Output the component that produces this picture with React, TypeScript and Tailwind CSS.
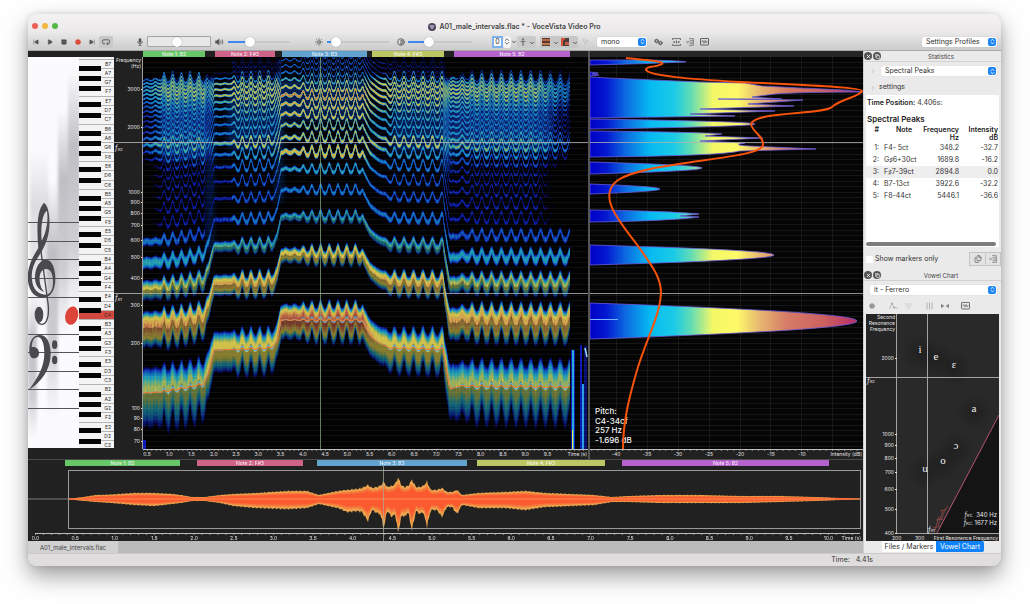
import React from "react";
import {
  SkipBack, SkipForward, Play, Square, Circle, Sun, Contrast, ChevronDown,
  ChevronRight, ChevronsUpDown, MousePointer2, X, Copy, Files,
} from "lucide-react";

type Pt = [number, number];

function lerp(points: Pt[], x: number): number {
  if (x <= points[0][0]) return points[0][1];
  for (let i = 1; i < points.length; i++) {
    const [x1, y1] = points[i];
    if (x <= x1) {
      const [x0, y0] = points[i - 1];
      return y0 + ((y1 - y0) * (x - x0)) / (x1 - x0);
    }
  }
  return points[points.length - 1][1];
}

const freqToY = (f: number) => 192 - 216 * Math.log10(f / 1000);
const yToFreq = (y: number) => 1000 * Math.pow(10, (192 - y) / 216);

/* ---------- voice model ---------- */
const PITCH: Pt[] = [
  [143, 393], [160, 392], [190, 387], [203, 384], [208, 375], [211, 361], [214, 350], [270, 348], [277, 342],
  [279, 330], [281, 320], [362, 320], [366, 328], [370, 335], [376, 341], [390, 348], [443, 349], [446, 365],
  [449, 385], [451, 389], [458, 386], [571, 387],
];
const DEPTH: Pt[] = [
  [143, 0.6], [160, 1], [164, 4.4], [204, 4.8], [210, 0.3], [232, 0.4], [238, 4.4], [272, 4.6], [280, 0.8], [298, 1.2],
  [306, 3.6], [318, 4.4], [360, 4.4], [366, 0.2], [384, 0.4], [394, 4], [442, 4.6], [448, 0.4], [455, 1.5], [468, 2.8], [474, 4.8], [571, 4.8],
];
const LOW: Pt[] = [
  [110, -22], [130, -21], [235, -9], [350, -19], [470, -27], [585, -32], [700, -39], [1300, -38], [1500, -30],
  [1660, -21], [1850, -29], [2200, -30], [2600, -24], [2900, -18], [3150, -20], [3350, -27], [3500, -50],
];
const MID: Pt[] = [
  [150, -17], [188, -16], [376, -12], [564, -25], [750, -32], [940, -34], [1130, -34], [1400, -30], [1550, -25],
  [1690, -18], [1900, -27], [2200, -26], [2500, -21], [2850, -13], [3200, -16], [3400, -28], [3600, -40], [4000, -38], [4300, -50],
];
const HIGH: Pt[] = [
  [220, -6], [257, -5], [514, -14], [771, -26], [1028, -31], [1285, -26], [1542, -13], [1799, -19], [2056, -20],
  [2313, -13], [2570, -11], [2850, -6], [3100, -16], [3400, -26], [3700, -33], [4200, -33],
];

const vibrato = (x: number) => {
  const period = x < 364 ? 8.7 : x < 448 ? 9.5 : 9.8;
  const origin = x < 364 ? 164 : x < 448 ? 394.5 : 481.8;
  const a = (2 * Math.PI * (x - origin)) / period;
  return -(Math.cos(a) + 0.2 * Math.cos(2 * a));
};
const pitchY = (x: number, k = 1) => lerp(PITCH, x) + k * lerp(DEPTH, x) * vibrato(x);

function level(f: number, f0: number, x: number): number {
  let e: number;
  if (f0 < 188) {
    const m = Math.min(1, Math.max(0, (f0 - 128) / 50));
    e = lerp(LOW, f) * (1 - m) + lerp(MID, f) * m;
  } else {
    const m = Math.min(1, Math.max(0, (f0 - 200) / 45));
    e = lerp(MID, f) * (1 - m) + lerp(HIGH, f) * m;
  }
  if (f > 650) {
    if (x < 166) e -= (166 - x) * 0.4;
    if (x > 535) e -= (x - 535) * 0.3;
    if (x > 205 && x < 232) e -= 5;
  }
  return e + 1.6 * Math.sin(x * 1.9 + f * 0.013);
}

const LEVELS: [number, string][] = [
  [-44, "#08085c"], [-41, "#0a1fa0"], [-38, "#0f48b4"], [-35, "#1272b8"], [-31, "#1c98b4"], [-27, "#4aa890"],
  [-24, "#98ae58"], [-21, "#cfc04a"], [-15, "#cfa24c"], [-10.5, "#bf7746"], [-7, "#ab5340"],
];

const X0 = 143;
const X1 = 570;

function contour(threshold: number, harmonics: number, lowerOnly = false): string {
  let d = "";
  for (let n = 1; n <= harmonics; n++) {
    let up: string[] = [];
    let down: string[] = [];
    const flush = () => {
      if (up.length > 1) d += "M" + up.join("L") + "L" + down.reverse().join("L") + "Z";
      up = [];
      down = [];
    };
    for (let x = X0; x <= X1; x++) {
      const f0 = yToFreq(lerp(PITCH, x));
      const f = n * yToFreq(pitchY(x, n > 5 ? 1.2 : 1));
      const e = level(n * f0, f0, x);
      if (e <= threshold || f > 4300) {
        flush();
        continue;
      }
      const spread = n * f0 > 1300 ? 58 : 50;
      const hw = Math.min(spread * Math.sqrt((e - threshold) / 43), f0 * 0.48);
      // low partials smear outwards while the pitch sweeps
      const smear = n <= 2 ? (lerp(DEPTH, x) / 4.8) * vibrato(x) : 0;
      up.push(`${x} ${(lowerOnly ? freqToY(f) : freqToY(f + hw * (1 - 0.07 * smear))).toFixed(1)}`);
      down.push(`${x} ${freqToY(f - hw * (1 + 0.12 * smear)).toFixed(1)}`);
    }
    flush();
  }
  return d;
}

const CONTOURS = LEVELS.map(([t, color]) => ({ color, d: contour(t, 36) }));
const SHADE = contour(-44, 3, true);
const pitchLine = (k: number) => {
  const out: string[] = [];
  for (let x = X0; x <= X1; x++) out.push(`${x} ${pitchY(x, k).toFixed(1)}`);
  return "M" + out.join("L");
};
const SEMITONES = Array.from({ length: 72 }, (_, i) => 61.5 + i * 5.42);
const FREQ_LABELS = [3000, 2000, 1000, 900, 800, 700, 600, 500, 400, 300, 200, 100, 90, 80, 70];
const SVG_FONT = "[font-family:Inter,'Liberation_Sans',sans-serif]";

/* ---------- staff and keyboard ---------- */
function Staff() {
  const lines = [222, 241, 259, 278, 297, 334, 352, 371, 389, 408];
  return (
    <g>
      <defs>
        <linearGradient id="smudge" x1="0" y1="0" x2="0" y2="1">
          <stop offset="0" stopColor="#b4b4ba" stopOpacity="0" />
          <stop offset="0.3" stopColor="#b4b4ba" stopOpacity="0.85" />
          <stop offset="0.7" stopColor="#bebec4" stopOpacity="0.75" />
          <stop offset="1" stopColor="#d0d0d4" stopOpacity="0" />
        </linearGradient>
        <filter id="soft"><feGaussianBlur stdDeviation="1.5" /></filter>
        <clipPath id="staffClip"><rect x="28" y="57" width="51" height="391" /></clipPath>
      </defs>
      <rect x="28" y="57" width="51" height="391" fill="#fbfafc" />
      <g clipPath="url(#staffClip)">
        <g filter="url(#soft)">
          <rect x="68" y="70" width="12" height="250" fill="url(#smudge)" />
          <rect x="58" y="110" width="10" height="230" fill="url(#smudge)" />
          <rect x="47" y="180" width="11" height="240" fill="url(#smudge)" />
          <rect x="30" y="150" width="18" height="180" fill="url(#smudge)" opacity="0.5" />
          <rect x="28" y="300" width="9" height="140" fill="url(#smudge)" />
        </g>
        {lines.map((y) => <rect key={y} x="28" y={y} width="51" height="1" fill="#55555a" />)}
        <g transform="translate(20 190) scale(0.3333)" fill="#4a4a4e">
          <path fillRule="evenodd" d="M72 38C86 48 90 80 88 110C86 150 68 180 54 202C38 226 33 248 36 270C39 298 54 313 76 314C92 313 99 298 99 275C99 250 91 237 78 237C63 238 57 255 59 272C61 290 66 298 73 306C54 300 45 284 45 262C45 232 60 209 78 209C98 209 107 240 106 270C105 302 92 323 68 323C42 323 24 300 23 262C23 226 42 194 55 174C50 120 50 60 72 38ZM81 62C66 72 62 112 65 152C77 130 86 98 81 62Z" />
          <path d="M57 140L84 340C89 378 80 403 66 403C57 403 51 396 50 386" fill="none" stroke="#4a4a4e" strokeWidth="4" />
          <ellipse cx="57" cy="374" rx="13" ry="24" />
          <path d="M26 600C56 562 73 528 73 490C73 456 64 441 53 441C42 441 36 452 35 472C46 468 57 476 57 489C57 500 50 505 42 505C33 505 28 496 28 482C28 452 40 435 59 435C80 435 92 458 92 492C92 540 62 578 26 600Z" />
          <ellipse cx="104" cy="464" rx="8" ry="13" />
          <ellipse cx="104" cy="510" rx="8" ry="13" />
          <ellipse cx="155" cy="377" rx="19" ry="28" transform="rotate(14 155 377)" fill="#dc4439" />
        </g>
      </g>
    </g>
  );
}

function Keyboard() {
  const names = ["B", "A", "G", "F", "E", "D", "C"];
  const blacks = [4, 14, 24, 40, 51];
  return (
    <g>
      <rect x="79" y="57" width="35" height="391" fill="#f4f4f4" />
      {Array.from({ length: 42 }, (_, i) => {
        const y = 63.5 + i * 9.31;
        const label = names[i % 7] + (7 - Math.floor(i / 7));
        return (
          <g key={label}>
            {label === "C4" && <rect x="79" y={y - 4} width="35" height="9" fill="#d5483f" />}
            <rect x="79" y={Math.round(y - 5)} width="35" height="1" fill="#b4b4b4" />
            <text x="111" y={y + 2} textAnchor="end" fontSize="5" fill="#2c2c2c">{label}</text>
          </g>
        );
      })}
      {Array.from({ length: 30 }, (_, i) => (
        <rect key={i} x="79" y={Math.round(61.5 + Math.floor(i / 5) * 65.1 + blacks[i % 5] + 0.5)} width="22" height="5" fill="#050505" />
      ))}
    </g>
  );
}

function LeftScale() {
  return (
    <svg role="img" aria-label="Staff, keyboard and frequency scale" viewBox="28 51 115 408" preserveAspectRatio="none" className={`block h-[408px] w-[115px] shrink-0 bg-[#222122] ${SVG_FONT}`}>
      <Staff />
      <Keyboard />
      <g fill="#e6e6e6" fontSize="5" textAnchor="end">
        <text x="141" y="62">Frequency</text>
        <text x="141" y="68">(Hz)</text>
        {FREQ_LABELS.map((f) => (
          <g key={f}>
            <text x="140" y={freqToY(f) + 2}>{f}</text>
            <rect x="141" y={Math.round(freqToY(f))} width="2" height="1" />
          </g>
        ))}
      </g>
      <g fill="#9c9c9c">
        <rect x="142" y="57" width="1" height="392" />
        <rect x="114" y="142" width="29" height="1" />
        <rect x="114" y="293" width="29" height="1" />
      </g>
      <g fill="#e6e6e6" fontStyle="italic" fontSize="7">
        <text x="115" y="150">f<tspan fontSize="4" dy="1">R2</tspan></text>
        <text x="115" y="300">f<tspan fontSize="4" dy="1">R1</tspan></text>
      </g>
    </svg>
  );
}

/* ---------- note strips ---------- */
type Note = { name: string; className: string; gap: number; span: number };
const TOP_NOTES: Note[] = [
  { name: "Note 1: B2", className: "bg-[#67c767]", gap: 0, span: 62 },
  { name: "Note 2: F#3", className: "bg-[#ce6289]", gap: 10, span: 60 },
  { name: "Note 3: B3", className: "bg-[#61a2ce]", gap: 7, span: 85 },
  { name: "Note 4: F#3", className: "bg-[#bcc663]", gap: 5, span: 72 },
  { name: "Note 5: B2", className: "bg-[#b562cd]", gap: 10, span: 116 },
];
const LOWER_NOTES: Note[] = [
  { ...TOP_NOTES[0], gap: 37, span: 115 },
  { ...TOP_NOTES[1], gap: 17, span: 106 },
  { ...TOP_NOTES[2], gap: 14, span: 150 },
  { ...TOP_NOTES[3], gap: 10, span: 128 },
  { ...TOP_NOTES[4], gap: 17, span: 207 },
];

function NoteStrip({ notes, tail }: { notes: Note[]; tail: number }) {
  return (
    <div className="flex h-[6px] w-full text-center text-[5px] leading-[6px] font-medium text-white/85">
      {notes.map((n) => (
        <React.Fragment key={n.name}>
          <span style={{ flex: `${n.gap} 0 0` }} />
          <span className={`min-w-0 overflow-hidden ${n.className}`} style={{ flex: `${n.span} 0 0` }}>{n.name}</span>
        </React.Fragment>
      ))}
      <span style={{ flex: `${tail} 0 0` }} />
    </div>
  );
}

function Spectrogram() {
  const ticks = Array.from({ length: 19 }, (_, i) => 0.5 + i * 0.5);
  return (
    <svg role="img" aria-label="Spectrogram" viewBox="143 57 445 402" preserveAspectRatio="none" className={`block h-[402px] w-full bg-[#020203] ${SVG_FONT}`}>
      <defs>
        <filter id="haze"><feGaussianBlur stdDeviation="3" /></filter>
      </defs>
      <g fill="#0a3a94" filter="url(#haze)">
        <rect x="160" y="82" width="52" height="76" opacity="0.65" />
        <rect x="228" y="82" width="54" height="68" opacity="0.5" />
        <rect x="282" y="80" width="84" height="40" opacity="0.5" />
        <rect x="392" y="82" width="56" height="70" opacity="0.5" />
        <rect x="452" y="84" width="100" height="66" opacity="0.65" />
        <rect x="207" y="82" width="6" height="170" opacity="0.5" />
        <rect x="276" y="82" width="6" height="120" opacity="0.5" />
        <rect x="443" y="82" width="8" height="90" opacity="0.6" />
      </g>
      {CONTOURS.map((c) => <path key={c.color} d={c.d} fill={c.color} />)}
      <path d={SHADE} fill="#000000" opacity="0.36" />
      <g fill="#0a19b8">
        <rect x="143" y="440" width="3" height="9" />
        <rect x="571" y="350" width="4" height="99" />
        <rect x="580" y="345" width="2" height="104" />
        <rect x="584" y="346" width="3" height="103" opacity="0.6" />
      </g>
      <rect x="572" y="350" width="2" height="99" fill="#26a8d8" />
      <rect x="572" y="430" width="1" height="19" fill="#e8e050" />
      <rect x="582" y="384" width="2" height="65" fill="#2a9ce0" />
      <path d="M585 348L587 357" stroke="#9cdcf0" strokeWidth="1.5" />
      {SEMITONES.map((y) => <rect key={y} x="143" y={Math.round(y)} width="445" height="1" fill="#ffffff" opacity="0.05" />)}
      <path d={pitchLine(0.6)} fill="none" stroke="#58b4ea" strokeWidth="1.1" />
      <path d={pitchLine(0.2)} fill="none" stroke="#f07a28" strokeWidth="1.1" />
      <rect x="320" y="57" width="1" height="402" fill="#7fa878" opacity="0.75" />
      <rect x="143" y="142" width="445" height="1" fill="#b4b4b4" opacity="0.8" />
      <rect x="143" y="293" width="445" height="1" fill="#b4b4b4" opacity="0.8" />
      <rect x="143" y="449" width="445" height="10" fill="#222122" />
      <rect x="143" y="449" width="445" height="1" fill="#bdbdbd" />
      {Array.from({ length: 100 }, (_, i) => <rect key={i} x={142.4 + i * 4.45} y="450" width="1" height="1" fill="#8a8a8a" />)}
      <g fill="#e2e2e2" fontSize="5" textAnchor="middle">
        {ticks.map((t) => <text key={t} x={124.8 + t * 44.5} y="456">{t.toFixed(1)}</text>)}
        <text x="587" y="456" textAnchor="end">Time (s)</text>
      </g>
    </svg>
  );
}

const LOBES: [number, number, number][] = [
  [119, 129, 755], [162, 174, 702], [184, 194, 660], [245, 265, 774], [303, 339, 857],
];

function Spectrum() {
  return (
    <svg role="img" aria-label="Short-term spectrum" viewBox="590 57 273 402" preserveAspectRatio="none" className={`block h-[402px] w-full bg-[#050505] ${SVG_FONT}`}>
      <defs>
        <linearGradient id="heat" gradientUnits="userSpaceOnUse" x1="590" y1="0" x2="863" y2="0">
          <stop offset="0" stopColor="#0000c4" />
          <stop offset="0.06" stopColor="#0418d0" />
          <stop offset="0.13" stopColor="#0c6ae0" />
          <stop offset="0.22" stopColor="#06baf2" />
          <stop offset="0.31" stopColor="#1ccbe6" />
          <stop offset="0.37" stopColor="#62dcb4" />
          <stop offset="0.45" stopColor="#f4f866" />
          <stop offset="0.54" stopColor="#fdf968" />
          <stop offset="0.62" stopColor="#e8b870" />
          <stop offset="0.72" stopColor="#d67c66" />
          <stop offset="0.86" stopColor="#cc6060" />
          <stop offset="0.97" stopColor="#b83068" />
        </linearGradient>
      </defs>
      {SEMITONES.map((y) => <rect key={y} x="590" y={Math.round(y)} width="273" height="1" fill="#ffffff" opacity="0.07" />)}
      {[616, 647, 678, 709, 740, 770, 801, 832].map((x) => <rect key={x} x={x} y="57" width="1" height="392" fill="#ffffff" opacity="0.07" />)}
      <g fill="url(#heat)" stroke="#6a5cdc" strokeWidth="0.8">
        <path d="M590 60L650 60Q684 61 686 62Q640 64 590 65Z" />
        <path d="M590 72L598 73L592 74L599 75L590 76Z" />
        <path d="M590 77L607 78L700 82L745 83L762 86L800 88Q850 90 863 92Q800 92 775 94L752 97L782 99L718 99L803 100L748 104L794 106L700 109L775 111L690 114L735 116Q660 117 590 118Z" />
        <path d="M590 131Q700 132 722 134L705 136L763 138L700 141L745 143Q730 145 750 146L816 149L740 151Q720 156 590 157Z" />
        <path d="M590 210Q670 211 699 214L680 216L699 217Q670 221 590 222Z" />
        {LOBES.map(([top, bottom, tip]) => (
          <path key={top} d={`M590 ${top}Q${2 * tip - 590} ${(top + bottom) / 2} 590 ${bottom}Z`} />
        ))}
      </g>
      <rect x="590" y="319" width="28" height="1" fill="#78b4ff" />
      <rect x="590" y="142" width="273" height="1" fill="#b0b0b0" opacity="0.8" />
      <rect x="590" y="293" width="273" height="1" fill="#b0b0b0" opacity="0.8" />
      <g fill="#f2f2f2" fontSize="8" fontWeight="500">
        <text x="595" y="414">Pitch:</text>
        <text x="595" y="424">C4-34cf</text>
        <text x="595" y="433">257 Hz</text>
        <text x="595" y="443">-1.696 dB</text>
      </g>
      <path
        d="M626 58C645 60 665 61 662 64C658 67 645 66 646 70C650 76 690 79 740 82C800 85 862 87 862 91C858 98 842 98 832 107C822 115 756 111 751 124C752 132 764 136 763 145C760 160 650 160 618 180C596 196 620 222 638 246C652 266 661 277 661 293C660 315 647 338 638 367C630 394 623 420 623 449"
        fill="none" stroke="#f8530c" strokeWidth="2"
      />
      <rect x="590" y="449" width="273" height="10" fill="#222122" />
      <rect x="590" y="449" width="273" height="1" fill="#bdbdbd" />
      {Array.from({ length: 44 }, (_, i) => <rect key={i} x={591.3 + i * 6.17} y="450" width="1" height="1" fill="#8a8a8a" />)}
      <g fill="#e2e2e2" fontSize="5" textAnchor="middle">
        {[-40, -35, -30, -25, -20, -15, -10].map((v, i) => <text key={v} x={616 + i * 31} y="456">{v}</text>)}
        <text x="862" y="456" textAnchor="end">Intensity (dB)</text>
      </g>
    </svg>
  );
}

/* ---------- overview wave ---------- */
const WAVE: [number, number, number][] = [
  [68, 0.4, 0.4], [80, 1.5, 1.5], [96, 4, 3], [112, 4.5, 4], [135, 6, 6], [154, 6, 7], [172, 5, 5], [181, 4, 4], [192, 2, 2], [205, 2, 2],
  [220, 4, 4], [234, 5, 7], [257, 6, 9], [288, 8, 10], [307, 8, 9], [319, 4, 5], [338, 8, 9], [347, 9, 13], [357, 10, 12], [362, 11, 13],
  [368, 14, 22], [372, 11, 11], [377, 12, 14], [380, 13, 15], [384, 17, 29], [387, 12, 12], [392, 13, 18], [395, 15, 15], [398, 21, 33], [402, 13, 16], [405, 12, 18],
  [408, 13, 13], [412, 19, 31], [416, 12, 12], [420, 12, 15], [423, 13, 13], [427, 17, 27], [431, 9, 11], [437, 9, 11], [442, 11, 18], [447, 7, 8], [452, 7, 8], [457, 9, 15], [462, 4, 6],
  [479, 6, 9], [506, 7, 9], [525, 8, 11], [545, 6, 8], [570, 5, 7], [594, 4, 6], [612, 2, 3], [630, 3, 3], [660, 4, 4], [700, 4, 4], [740, 3, 4],
  [780, 3, 3], [815, 2, 2], [840, 1, 1], [861, 0.3, 0.3],
];

function wavePath(scale: number, jitter: number): string {
  const up: Pt[] = WAVE.map(([x, a]) => [x, a]);
  const dn: Pt[] = WAVE.map(([x, , b]) => [x, b]);
  const top: string[] = [];
  const bottom: string[] = [];
  for (let x = 68; x <= 861; x++) {
    const j = 1 + jitter * Math.sin(x * 2.3) * Math.sin(x * 0.71);
    top.push(`${x} ${(499 - lerp(up, x) * scale * j).toFixed(1)}`);
    bottom.push(`${x} ${(499 + lerp(dn, x) * scale * j).toFixed(1)}`);
  }
  return "M" + top.join("L") + "L" + bottom.reverse().join("L") + "Z";
}

function Overview() {
  return (
    <svg role="img" aria-label="Waveform overview" viewBox="28 466 835 75" preserveAspectRatio="none" className={`block h-[75px] w-full bg-[#222122] ${SVG_FONT}`}>
      <rect x="28" y="498.5" width="833" height="1" fill="#7c7c7c" />
      <path d={wavePath(1, 0.12)} fill="#eda64e" />
      <path d={wavePath(0.78, 0.1)} fill="#f37a3c" />
      <path d={wavePath(0.58, 0.1)} fill="#fb5a30" />
      <rect x="75" y="498.5" width="760" height="1" fill="#ff9c50" opacity="0.8" />
      <rect x="68.5" y="470.5" width="792" height="58" fill="none" stroke="#9b9b9b" strokeWidth="1" />
      <rect x="383" y="466" width="1" height="75" fill="#a6b49c" opacity="0.7" />
      <rect x="35" y="533" width="825" height="1" fill="#bdbdbd" />
      {Array.from({ length: 104 }, (_, i) => <rect key={i} x={35 + i * 7.93} y="534" width="1" height="1" fill="#8a8a8a" />)}
      <g fill="#e2e2e2" fontSize="5" textAnchor="middle">
        {Array.from({ length: 21 }, (_, i) => <text key={i} x={35.5 + i * 39.65} y="540">{(i * 0.5).toFixed(1)}</text>)}
        <text x="861" y="540" textAnchor="end">Time (s)</text>
      </g>
    </svg>
  );
}

/* ---------- controls ---------- */
const RANGE =
  "h-[10px] min-w-0 shrink-0 appearance-none bg-[length:100%_2px] bg-center bg-no-repeat outline-none [&::-webkit-slider-thumb]:size-[10px] [&::-webkit-slider-thumb]:appearance-none [&::-webkit-slider-thumb]:rounded-full [&::-webkit-slider-thumb]:bg-white [&::-webkit-slider-thumb]:shadow-[0_0_1px_rgba(0,0,0,0.45)]";

function IconButton({ label, className = "", children }: { label: string; className?: string; children: React.ReactNode }) {
  return (
    <button type="button" aria-label={label} className={`flex h-[12px] w-[14px] shrink-0 items-center justify-center rounded-[2px] text-[#555] ${className}`}>
      {children}
    </button>
  );
}

function Dropdown({ label, value, className }: { label: string; value: string; className: string }) {
  return (
    <label className={`flex h-[10px] items-center rounded-[2px] bg-white pr-[1px] shadow-[0_0_1px_rgba(0,0,0,0.2)] ${className}`}>
      <select aria-label={label} className="h-[10px] min-w-0 flex-1 appearance-none bg-transparent pl-1 text-[7px] leading-[10px] text-[#303030] outline-none" defaultValue={value}>
        <option>{value}</option>
      </select>
      <span className="flex size-[8px] items-center justify-center rounded-[2px] bg-[#1b84f5] text-white">
        <ChevronsUpDown size={7} strokeWidth={3} />
      </span>
    </label>
  );
}

function WaveBoxIcon() {
  return (
    <svg width="9" height="8" viewBox="0 0 9 8" fill="none" stroke="currentColor">
      <rect x="0.5" y="0.5" width="8" height="6.5" rx="0.5" strokeWidth="0.9" />
      <path d="M1.6 4.2L2.8 2.4L4 5.2L5.2 2.4L6.2 5L7.4 3" strokeWidth="0.7" />
    </svg>
  );
}

function SideLinesIcon() {
  return (
    <svg width="8" height="8" viewBox="0 0 8 8" fill="none" stroke="currentColor" strokeWidth="0.8">
      <path d="M3 0.6H7.4V7.4H3M3.6 2.3H7.4M3.6 4H7.4M3.6 5.7H7.4M0 4H2.4M1.4 2.8L2.6 4L1.4 5.2" />
    </svg>
  );
}

function Toolbar() {
  return (
    <div role="toolbar" className="flex h-[17px] items-center pr-1 pl-[1px]">
      <IconButton label="Go to start"><SkipBack size={6} fill="currentColor" /></IconButton>
      <IconButton label="Play"><Play size={6} fill="currentColor" /></IconButton>
      <IconButton label="Stop"><Square size={6} fill="currentColor" /></IconButton>
      <IconButton label="Record" className="text-[#dc4a3c]"><Circle size={6} fill="currentColor" /></IconButton>
      <IconButton label="Go to end"><SkipForward size={6} fill="currentColor" /></IconButton>
      <IconButton label="Loop" className="bg-[#c9c8c9]">
        <svg width="8" height="6" viewBox="0 0 8 6" fill="none" stroke="currentColor"><path d="M3 4.8H1.6Q0.6 4.8 0.6 3.8V1.8Q0.6 0.8 1.6 0.8H6.4Q7.4 0.8 7.4 1.8V3.8Q7.4 4.8 6.4 4.8H5.4" strokeWidth="0.9" /><path d="M6 3.2V6L4 4.8Z" fill="currentColor" stroke="none" /></svg>
      </IconButton>
      <IconButton label="Microphone" className="ml-[20px]">
        <svg width="6" height="8" viewBox="0 0 6 8" fill="none" stroke="currentColor" strokeWidth="0.8"><rect x="1.7" y="0.2" width="2.6" height="4.6" rx="1.3" fill="currentColor" stroke="none" /><path d="M0.6 3.2Q0.6 5.8 3 5.8Q5.4 5.8 5.4 3.2M3 5.8V7.6M1.6 7.6H4.4" /></svg>
      </IconButton>
      <span className="flex h-[11px] w-[64px] items-center rounded-[1px] border border-[#a4a4a4] bg-[#e9e8e9]">
        <input type="range" aria-label="Input gain" defaultValue={46} className={`${RANGE} w-full`} />
      </span>
      <IconButton label="Mute" className="ml-[2px]">
        <svg width="10" height="8" viewBox="0 0 10 8" fill="none" stroke="currentColor" strokeWidth="0.8"><path d="M0.3 2.6H2L4.4 0.6V7.4L2 5.4H0.3Z" fill="currentColor" stroke="none" /><path d="M5.6 2.5Q6.6 4 5.6 5.5M7.1 1.6Q8.6 4 7.1 6.4" /></svg>
      </IconButton>
      <input type="range" aria-label="Volume" defaultValue={32} className={`${RANGE} ml-[1px] w-[62px] bg-[linear-gradient(90deg,#3c88f0_34%,#c9c9c9_34%)]`} />
      <IconButton label="Brightness" className="ml-[22px]"><Sun size={8} strokeWidth={2.5} /></IconButton>
      <input type="range" aria-label="Brightness level" defaultValue={8} className={`${RANGE} ml-[1px] w-[62px] bg-[linear-gradient(90deg,#3c88f0_14%,#c9c9c9_14%)]`} />
      <IconButton label="Contrast" className="ml-[5px]"><Contrast size={8} strokeWidth={2.5} /></IconButton>
      <input type="range" aria-label="Contrast level" defaultValue={30} className={`${RANGE} w-[64px] bg-[linear-gradient(90deg,#3c88f0_32%,#c9c9c9_32%)]`} />
      <input type="text" aria-label="Octave shift" defaultValue="0" className="ml-[20px] h-[12px] w-[11px] shrink-0 border-2 border-[#7eb0ec] bg-white text-center text-[7px] text-[#222] outline-none" />
      <IconButton label="Step" className="!w-[8px] rounded-[3px] bg-[#f4f4f4]"><ChevronsUpDown size={9} strokeWidth={2.5} /></IconButton>
      <IconButton label="Shift options" className="!w-[6px]"><ChevronDown size={6} strokeWidth={4} /></IconButton>
      <span className="flex rounded-[2px] bg-[#cbcacb]">
        <IconButton label="Marker" className="!w-[11px]">
          <svg width="6" height="8" viewBox="0 0 6 8" fill="#777"><circle cx="3" cy="1.4" r="1.2" /><path d="M0.4 3H5.6V4H3.7V7.8H2.3V4H0.4Z" /></svg>
        </IconButton>
        <IconButton label="Marker options" className="!w-[8px] pt-[3px]"><ChevronDown size={6} strokeWidth={4} /></IconButton>
      </span>
      <span className="ml-[4px] flex items-center rounded-[2px] bg-[#c8c7c8]">
        <IconButton label="Spectrogram view" className="!w-[12px]">
          <svg width="8" height="8" viewBox="0 0 8 8"><rect width="8" height="8" fill="#5d3a30" /><rect y="1" width="8" height="2" fill="#b4644c" /><rect y="5" width="8" height="2" fill="#b87a50" /></svg>
        </IconButton>
        <IconButton label="View options" className="!w-[7px] pt-[3px]"><ChevronDown size={6} strokeWidth={4} /></IconButton>
        <IconButton label="Spectrum view" className="!w-[12px]">
          <svg width="8" height="8" viewBox="0 0 8 8"><rect width="8" height="8" fill="#4a4038" /><path d="M0 0h5L2 3v5H0Z" fill="#d2523e" /><path d="M4 4h4v3H4Z" fill="#c45a4a" /></svg>
        </IconButton>
        <IconButton label="Spectrum options" className="!w-[7px] pt-[3px]"><ChevronDown size={6} strokeWidth={4} /></IconButton>
      </span>
      <IconButton label="Cursor" className="!text-[#bcbcbc]"><MousePointer2 size={7} /></IconButton>
      <Dropdown label="Channels" value="mono" className="ml-[5px] w-[50px] shrink-0" />
      <IconButton label="Settings" className="ml-[4px]">
        <svg width="9" height="8" viewBox="0 0 9 8" fill="none" stroke="currentColor"><circle cx="2.6" cy="3" r="1.5" strokeWidth="1.6" strokeDasharray="1.2 0.3" /><circle cx="6.4" cy="5" r="1.5" strokeWidth="1.6" strokeDasharray="1.2 0.3" /></svg>
      </IconButton>
      <IconButton label="Fit" className="ml-[4px]">
        <svg width="9" height="8" viewBox="0 0 9 8" fill="none" stroke="currentColor" strokeWidth="0.8"><path d="M0.5 2V0.6H8.5V2M0.5 6V7.4H8.5V6M4.5 2.4V5.6" /><path d="M3.6 4L1.6 2.8V5.2ZM5.4 4L7.4 2.8V5.2Z" fill="currentColor" stroke="none" /></svg>
      </IconButton>
      <IconButton label="Side panel" className="!text-[#777]"><SideLinesIcon /></IconButton>
      <IconButton label="Wave settings"><WaveBoxIcon /></IconButton>
      <Dropdown label="Settings profiles" value="Settings Profiles" className="ml-auto w-[75px] shrink-0" />
    </div>
  );
}

/* ---------- side panel ---------- */
function PanelHeader({ title }: { title: string }) {
  return (
    <header className="-ml-[2px] flex h-[11px] items-center border-b border-[#d2d1d2] text-[6px] text-[#444]">
      <button type="button" aria-label={`Close ${title}`} className="flex size-[8px] items-center justify-center rounded-full bg-[#555] text-white"><X size={5} strokeWidth={4} /></button>
      <button type="button" aria-label={`Detach ${title}`} className="ml-[1px] flex size-[8px] items-center justify-center rounded-full bg-[#555] text-white"><Copy size={5} strokeWidth={3} /></button>
      <h2 className="flex-1 text-center">{title}</h2>
    </header>
  );
}

const PEAKS = [
  ["1:", "F4- 5ct", "348.2", "-32.7"],
  ["2:", "G♯6+30ct", "1689.8", "-16.2"],
  ["3:", "F♯7-39ct", "2894.8", "0.0"],
  ["4:", "B7-13ct", "3922.6", "-32.2"],
  ["5:", "F8-44ct", "5446.1", "-36.6"],
];

function Statistics() {
  return (
    <section className="flex flex-col">
      <PanelHeader title="Statistics" />
      <div className="flex h-[18px] items-center pr-[4px] pl-[4px]">
        <ChevronRight size={6} className="mr-[5px] text-[#999]" />
        <Dropdown label="Statistics type" value="Spectral Peaks" className="flex-1" />
      </div>
      <button type="button" className="flex h-[15px] items-center gap-[3px] pl-[4px] text-[7px] text-[#303030]">
        <ChevronRight size={6} className="text-[#999]" />settings
      </button>
      <div className="mr-[2px] flex h-[152px] flex-col bg-white text-[7px] text-[#333]">
        <p className="mt-[2px] h-[12px] pl-[1px] leading-[12px]"><b className="font-semibold text-[#222]">Time Position:</b> 4.406s:</p>
        <h3 className="mt-[4px] h-[12px] pl-[1px] text-[8px] leading-[12px] font-semibold text-[#222]">Spectral Peaks</h3>
        <table className="mt-[1px] w-full table-fixed border-collapse">
          <colgroup><col className="w-[13px]" /><col className="w-[44px]" /><col className="w-[36px]" /><col /></colgroup>
          <thead className="align-top leading-[8px] text-[#222]">
            <tr>
              <th className="pb-[6px] text-right font-semibold">#</th>
              <th className="pl-[6px] font-semibold">Note</th>
              <th className="text-right font-semibold">Frequency Hz</th>
              <th className="pr-[1px] text-right font-semibold">Intensity<br />dB</th>
            </tr>
          </thead>
          <tbody>
            {PEAKS.map(([i, note, hz, db]) => (
              <tr key={i} className={`h-[12px] leading-[12px] ${i === "3:" ? "bg-[#efeeef]" : ""}`}>
                <td className="text-right">{i}</td>
                <td className="pl-[5px] whitespace-nowrap">{note}</td>
                <td className="text-right">{hz}</td>
                <td className="pr-[1px] text-right">{db}</td>
              </tr>
            ))}
          </tbody>
        </table>
        <div className="mt-auto mr-[3px] mb-[1px] h-[4px] rounded-full bg-[#7d7d7d]" />
      </div>
      <div className="flex h-[23px] items-center pt-[1px] text-[7px] text-[#303030]">
        <label className="flex items-center gap-[2px]">
          <input type="checkbox" className="size-[7px] appearance-none rounded-[1px] bg-white" />Show markers only
        </label>
        <span className="ml-auto flex border border-[#c4c4c4] bg-[#e4e3e4]">
          <IconButton label="Copy table" className="!w-[15px]"><Files size={8} /></IconButton>
          <IconButton label="Export table" className="!w-[15px] border-l border-[#c4c4c4] !text-[#888]"><SideLinesIcon /></IconButton>
        </span>
      </div>
    </section>
  );
}

const VOWELS: [string, number, number][] = [
  ["i", 920, 353], ["e", 936, 360], ["ε", 954, 368], ["a", 974, 412], ["ɔ", 956, 449], ["o", 943, 464], ["u", 925, 472],
];
const VOWEL_Y: [number, number][] = [[2000, 358], [1000, 434], [900, 445], [800, 458], [700, 472], [600, 489], [500, 509], [400, 533]];

function VowelPlot() {
  return (
    <svg role="img" aria-label="Vowel chart" viewBox="866 314 133 227" preserveAspectRatio="none" className={`block h-[227px] w-full bg-[#262526] ${SVG_FONT}`}>
      <defs>
        <radialGradient id="spot"><stop offset="0" stopColor="#181718" stopOpacity="0.5" /><stop offset="1" stopColor="#181718" stopOpacity="0" /></radialGradient>
      </defs>
      <rect x="897" y="314" width="102" height="219" fill="#2a292a" />
      {VOWELS.map(([v, x, y]) => <circle key={v} cx={x} cy={y} r="18" fill="url(#spot)" />)}
      <path d="M999 415L937 533H999Z" fill="#151415" />
      <path d="M999 415L937 533" stroke="#b4566e" strokeWidth="1" />
      <path d="M935 530l4-14M938 526l5-16M941 520l4-10l3-4M933 528l8-2M936 520l7-1M940 511l6-2" stroke="#9a4a48" strokeWidth="0.7" fill="none" />
      <g fill="#a4a4a4">
        <rect x="896" y="314" width="1" height="220" />
        <rect x="927" y="314" width="1" height="220" />
        <rect x="866" y="377" width="133" height="1" />
        <rect x="896" y="533" width="103" height="1" />
      </g>
      <g fill="#e6e6e6" fontSize="5" textAnchor="end">
        <text x="895" y="319">Second</text>
        <text x="895" y="325">Resonance</text>
        <text x="895" y="331">Frequency</text>
        {VOWEL_Y.map(([f, y]) => (
          <g key={f}><text x="894" y={y + 2}>{f}</text><rect x="895" y={y} width="2" height="1" /></g>
        ))}
        <text x="998" y="540">First Resonance Frequency</text>
        <text x="997" y="517" fontSize="6"><tspan fontStyle="italic">f</tspan><tspan fontSize="4">R1</tspan>:&#160; 340 Hz</text>
        <text x="997" y="525" fontSize="6"><tspan fontStyle="italic">f</tspan><tspan fontSize="4">R2</tspan>: 1677 Hz</text>
      </g>
      <g fill="#e6e6e6" fontSize="5">
        <text x="892" y="540">200</text>
        <text x="915" y="540">300</text>
        <text x="867" y="383" fontSize="7" fontStyle="italic">f<tspan fontSize="4">R2</tspan></text>
        <text x="928" y="532" fontSize="7" fontStyle="italic">f<tspan fontSize="4">R1</tspan></text>
      </g>
      <g fill="#f0f0f0" fontSize="11" textAnchor="middle" className="[font-family:'Liberation_Serif','DejaVu_Serif',serif]">
        {VOWELS.map(([v, x, y]) => <text key={v} x={x} y={y}>{v}</text>)}
      </g>
    </svg>
  );
}

function VowelChart() {
  return (
    <section className="flex flex-1 flex-col">
      <PanelHeader title="Vowel Chart" />
      <div className="flex h-[17px] items-center pr-[4px] pl-[4px]">
        <Dropdown label="Vowel set" value="it - Ferrero" className="flex-1" />
      </div>
      <div className="flex h-[16px] items-center gap-[3px] text-[#a8a8a8]">
        <IconButton label="Record vowel" className="!w-[12px] !text-[#999]"><Circle size={6} fill="currentColor" /></IconButton>
        <IconButton label="Trace" className="ml-[5px] !text-[#aaa]">
          <svg width="9" height="8" viewBox="0 0 9 8" fill="none" stroke="currentColor"><path d="M0.5 7L3 1.5L5 5.5L8.5 6" strokeWidth="0.8" /><circle cx="3" cy="1.5" r="1" fill="currentColor" stroke="none" /><circle cx="5" cy="5.5" r="1" fill="currentColor" stroke="none" /></svg>
        </IconButton>
        <IconButton label="Points" className="!w-[10px] !text-[#ccc]">
          <svg width="7" height="6" viewBox="0 0 7 6" fill="none" stroke="currentColor"><path d="M0 1H7M1 3H6M2 5H5" strokeWidth="0.9" /></svg>
        </IconButton>
        <IconButton label="Bars" className="ml-[8px] !w-[10px] !text-[#aaa]">
          <svg width="7" height="8" viewBox="0 0 7 8" stroke="currentColor"><path d="M1 0.5V7.5M3.5 0.5V7.5M6 0.5V7.5" strokeWidth="0.9" /></svg>
        </IconButton>
        <IconButton label="Link" className="ml-[2px] !w-[12px] !text-[#888]">
          <svg width="8" height="6" viewBox="0 0 8 6" fill="currentColor"><path d="M0 0.8L3.4 3L0 5.2ZM8 0.8L4.6 3L8 5.2Z" /></svg>
        </IconButton>
        <IconButton label="Chart settings" className="ml-[6px] !w-[11px] !text-[#666]"><WaveBoxIcon /></IconButton>
      </div>
      <div className="mr-[2px]"><VowelPlot /></div>
      <div role="tablist" className="flex h-[12px] items-start pl-[16px] text-[7px] leading-[10px]">
        <button type="button" role="tab" aria-selected="false" className="h-[11px] w-[54px] rounded-l-[2px] bg-white text-[#303030]">Files / Markers</button>
        <button type="button" role="tab" aria-selected="true" className="h-[11px] w-[48px] rounded-r-[2px] bg-[#0f82fa] text-white">Vowel Chart</button>
      </div>
    </section>
  );
}

export default function App() {
  return (
    <div className="min-h-screen overflow-hidden bg-[#fefefe] px-7 pt-[14px] pb-[38px] font-['Inter','Liberation_Sans',sans-serif] antialiased">
      <div className="mr-[1px] flex flex-col overflow-hidden rounded-[9px] bg-[#ebeaeb] shadow-[0_10px_22px_rgba(0,0,0,0.38),0_0_6px_rgba(0,0,0,0.12)]">
        <div className="h-[37px] border-b border-[#a9a9a9] bg-gradient-to-b from-[#f4f2f3] via-[#ebe9ea] to-[#cdcccd]">
          <div className="flex h-[19px] items-end">
            <div className="flex w-[90px] items-center gap-[4px] pb-[4px] pl-[4px]">
              <span className="size-[6px] rounded-full bg-[#ed5f56]" />
              <span className="size-[6px] rounded-full bg-[#f0b73b]" />
              <span className="size-[6px] rounded-full bg-[#51b941]" />
            </div>
            <h1 className="flex flex-1 items-center justify-center gap-[3px] pr-[90px] pb-[2px] text-[7px] leading-[9px] font-semibold whitespace-pre text-[#444]">
              <svg width="8" height="8" viewBox="0 0 8 8"><circle cx="4" cy="4" r="4" fill="#4b4560" /><path d="M1.8 2.2L4 6L6.2 2.2M3.2 2.2L4 3.6L4.8 2.2" stroke="#e4e0ee" strokeWidth="0.8" fill="none" /></svg>
              {"A01_male_intervals.flac * - VoceVista Video Pro"}
            </h1>
          </div>
          <Toolbar />
        </div>

        <div className="flex">
          <main className="flex min-w-0 flex-1 flex-col bg-[#222122]">
            <div className="flex">
              <LeftScale />
              <div className="min-w-0 flex-[445]"><NoteStrip notes={TOP_NOTES} tail={18} /><Spectrogram /></div>
              <div className="w-[2px] bg-[#555]" />
              <div className="min-w-0 flex-[273]"><div className="h-[6px] bg-[#262526]" /><Spectrum /></div>
            </div>
            <div className="border-t border-[#4a4a4a]"><NoteStrip notes={LOWER_NOTES} tail={34} /></div>
            <Overview />
            <div role="tablist" className="flex h-[12px] bg-[#bcbbbc]">
              <button type="button" role="tab" aria-selected="true" className="w-[90px] rounded-b-[1px] bg-[#d2d1d2] text-[6px] leading-[11px] text-[#444]">A01_male_intervals.flac</button>
            </div>
          </main>
          <aside className="flex w-[138px] shrink-0 flex-col border-l border-[#cfcecf] bg-[#ebeaeb] pl-[2px]">
            <Statistics />
            <VowelChart />
          </aside>
        </div>

        <footer className="flex h-[13px] items-center justify-end gap-[6px] border-t border-[#cbcacb] bg-[#dfddde] pt-[1px] pr-[128px] text-[7px] text-[#333]">
          <span>Time:</span><span>4.41s</span>
        </footer>
      </div>
    </div>
  );
}
